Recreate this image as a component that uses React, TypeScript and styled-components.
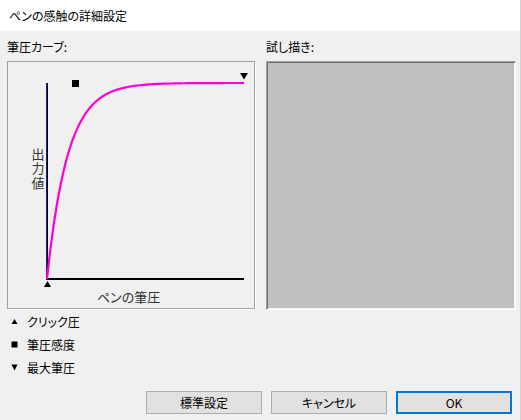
import React from "react";
import styled, { createGlobalStyle } from "styled-components";

const Global = createGlobalStyle`
  html, body { margin: 0; padding: 0; background: #f0f0f0; }
  * { box-sizing: border-box; }
`;

const Window = styled.div`
  width: 521px;
  height: 420px;
  display: flex;
  flex-direction: column;
  background: #f0f0f0;
  border-right: 1px solid #d2d2d2;
  font-family: "Noto Sans CJK JP", "Noto Sans", sans-serif;
  font-size: 12px;
  font-feature-settings: "palt";
  color: #000;
`;

const TitleBar = styled.div`
  height: 31px;
  background: #fff;
  display: flex;
  align-items: center;
  padding-left: 9px;
  font-size: 12px;
`;

const Content = styled.div`
  flex: 1;
  display: flex;
  flex-direction: column;
  padding: 8px 4px 0 7px;
`;

const Panels = styled.div`
  display: flex;
  gap: 11px;
`;

const Column = styled.div<{ $width: number }>`
  width: ${(p) => p.$width}px;
  display: flex;
  flex-direction: column;
`;

const Label = styled.div`
  height: 16px;
  line-height: 16px;
  margin-bottom: 6px;
`;

const ChartBox = styled.div`
  width: 248px;
  height: 248px;
  border: 1px solid #a0a0a0;
  box-shadow: 1px 1px 0 #fff;
  background: #f0f0f0;
`;

const ChartSvg = styled.svg`
  display: block;
  width: 246px;
  height: 246px;
`;

const PreviewBox = styled.div`
  width: 250px;
  height: 249px;
  background: #c0c0c0;
  border-style: solid;
  border-width: 1px;
  border-color: #a0a0a0 #ffffff #ffffff #a0a0a0;
  box-shadow: inset 1px 1px 0 #707070, inset -1px -1px 0 #f4f4f4;
`;

const Legend = styled.div`
  display: flex;
  flex-direction: column;
`;

const LegendRow = styled.div`
  height: 23px;
  display: flex;
  align-items: center;
  gap: 9px;
  padding-left: 4px;
`;

const MarkerSvg = styled.svg`
  display: block;
  width: 7px;
  height: 7px;
`;

const ButtonBar = styled.div`
  display: flex;
  justify-content: flex-end;
  gap: 9px;
  margin-top: 12px;
  padding-right: 4px;
`;

const Button = styled.button<{ $primary?: boolean }>`
  width: 116px;
  height: 23px;
  padding: 0;
  background: #e1e1e1;
  border: 1px solid ${(p) => (p.$primary ? "#0078d7" : "#adadad")};
  box-shadow: ${(p) => (p.$primary ? "inset 0 0 0 1px #0078d7" : "none")};
  font-family: inherit;
  font-size: 12px;
  font-feature-settings: "palt";
  color: #000;
  display: flex;
  align-items: center;
  justify-content: center;
`;

const Marker: React.FC<{ kind: "up" | "square" | "down" }> = ({ kind }) => (
  <MarkerSvg viewBox="0 0 7 7">
    {kind === "up" && <polygon points="3.5,1 6.5,6 0.5,6" fill="#000" />}
    {kind === "square" && <rect x="0.5" y="0.5" width="6" height="6" fill="#000" />}
    {kind === "down" && <polygon points="0.5,0.5 6.5,0.5 3.5,6.5" fill="#000" />}
  </MarkerSvg>
);

function curvePoints(): string {
  const pts: string[] = [];
  const k = 9.5;
  const norm = 1 - Math.exp(-k);
  for (let i = 0; i <= 100; i++) {
    const t = i / 100;
    const x = 39 + 197 * t;
    const y = 217 - (196 * (1 - Math.exp(-k * t))) / norm;
    pts.push(`${x.toFixed(2)},${y.toFixed(2)}`);
  }
  return pts.join(" ");
}

const Chart: React.FC = () => (
  <ChartSvg viewBox="0 0 246 246">
    <rect x="38" y="21" width="2" height="197" fill="#000" />
    <rect x="38" y="21" width="1" height="195" fill="#1a237a" />
    <rect x="38" y="216" width="198" height="2" fill="#000" />
    <polyline points={curvePoints()} fill="none" stroke="#ff00d4" strokeWidth="2.2" />
    <rect x="64" y="18" width="7" height="7" fill="#000" />
    <polygon points="232,11 240,11 236,17.5" fill="#000" />
    <polygon points="39.5,219 43,225 36,225" fill="#000" />
    <text
      x="30"
      y="107"
      fontSize="13"
      fill="#333"
      textAnchor="middle"
      style={{
        fontFamily: '"Noto Sans CJK JP", sans-serif',
        writingMode: "vertical-rl",
        letterSpacing: "1.5px",
      }}
    >
      出力値
    </text>
    <text
      x="120.5"
      y="234"
      fontSize="13"
      fill="#333"
      textAnchor="middle"
      dominantBaseline="central"
      style={{ fontFamily: '"Noto Sans CJK JP", sans-serif', fontFeatureSettings: '"palt"' }}
    >
      ペンの筆圧
    </text>
  </ChartSvg>
);

export default function App() {
  return (
    <>
      <Global />
      <Window>
        <TitleBar>ペンの感触の詳細設定</TitleBar>
        <Content>
          <Panels>
            <Column $width={248}>
              <Label>筆圧カーブ:</Label>
              <ChartBox>
                <Chart />
              </ChartBox>
            </Column>
            <Column $width={250}>
              <Label>試し描き:</Label>
              <PreviewBox />
            </Column>
          </Panels>
          <Legend>
            <LegendRow>
              <Marker kind="up" />
              クリック圧
            </LegendRow>
            <LegendRow>
              <Marker kind="square" />
              筆圧感度
            </LegendRow>
            <LegendRow>
              <Marker kind="down" />
              最大筆圧
            </LegendRow>
          </Legend>
          <ButtonBar>
            <Button>標準設定</Button>
            <Button>キャンセル</Button>
            <Button $primary>OK</Button>
          </ButtonBar>
        </Content>
      </Window>
    </>
  );
}
